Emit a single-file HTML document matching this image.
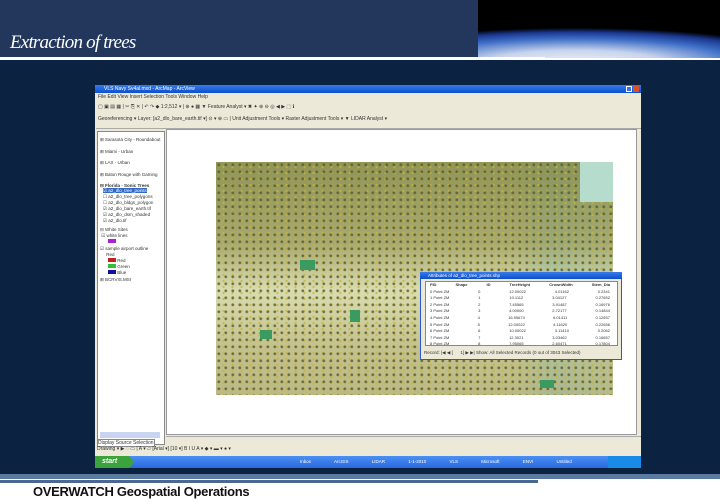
<!DOCTYPE html>
<html><head><style>
*{margin:0;padding:0;box-sizing:border-box}
body{width:720px;height:504px;position:relative;background:#fff;font-family:"Liberation Sans",sans-serif;overflow:hidden}
.a{position:absolute}
.t{font-size:5px;color:#333;white-space:nowrap}
</style></head><body>
<div class="a" style="left:0;top:0;width:720px;height:58px;background:#23375c"></div>
<div class="a" style="left:478px;top:0;width:242px;height:58px;background:#000"></div>
<div class="a" style="left:478px;top:0;width:242px;height:58px;background:radial-gradient(ellipse 300px 45px at 40% 110%,#f0f4fa 0%,#c8d4ec 30%,#4070c8 55%,#1a3890 70%,rgba(0,0,30,0) 80%)"></div>
<div class="a" style="left:10px;top:32px;font-family:'Liberation Serif',serif;font-style:italic;font-size:19px;color:#fff;letter-spacing:-0.8px">Extraction of trees</div>
<div class="a" style="left:0;top:57px;width:545px;height:3px;background:#fff"></div>
<div class="a" style="left:0;top:60px;width:720px;height:414px;background:#0b2240"></div>
<div class="a" style="left:0;top:474px;width:720px;height:5px;background:#5a7aa0"></div>
<div class="a" style="left:0;top:479px;width:720px;height:1px;background:#fff"></div>
<div class="a" style="left:0;top:480px;width:538px;height:3px;background:#4a6890"></div>
<div class="a" style="left:33px;top:484px;font-size:13px;font-weight:bold;color:#111;letter-spacing:-0.3px">OVERWATCH Geospatial Operations</div>

<div class="a" style="left:95px;top:85px;width:546px;height:383px;background:#ece9d8"></div>
<div class="a" style="left:95px;top:85px;width:546px;height:8px;background:linear-gradient(#3a7ae8,#0a4fd0)"></div>
<div class="a t" style="left:104px;top:86px;color:#fff">VLS Navy Sv4al.mxd - ArcMap - ArcView</div>
<div class="a" style="left:633px;top:86px;width:6px;height:6px;background:#d9502a"></div>
<div class="a" style="left:626px;top:86px;width:6px;height:6px;background:#3a70e0;border:1px solid #fff"></div>
<div class="a t" style="left:98px;top:94px">File Edit View Insert Selection Tools Window Help</div>
<div class="a t" style="left:98px;top:104px">▢ ▣ ▤ ▦ | ✂ ⎘ ✕ | ↶ ↷ ◆ 1:2,512 ▾ | ⊕ ● ▦ ▼ Feature Analyst ▾ ✖ ✦ ⊕ ⊖ ◎ ◀ ▶ ⬚ ℹ</div>
<div class="a t" style="left:98px;top:116px">Georeferencing ▾ Layer: [a2_dlo_bare_earth.tif ▾] ⊙ ▾ ⊕ ▭ | Unit Adjustment Tools ▾ Raster Adjustment Tools ▾ ▼ LIDAR Analyst ▾</div>
<div class="a" style="left:96px;top:128px;width:545px;height:1px;background:#aaa"></div>
<div class="a" style="left:97px;top:131px;width:68px;height:314px;background:#fff;border:1px solid #888"></div>
<div class="a t" style="left:100px;top:134px;line-height:11.5px;font-size:4.5px">⊞ Sarasota City - Roundabout<br>⊞ Miami - Urban<br>⊞ LAX - Urban<br>⊞ Baton Rouge with Gaming<br><b>⊟ Florida - Sonic Trees</b></div>
<div class="a t" style="left:103px;top:188px;line-height:6px;font-size:4.5px"><span style="background:#316ac5;color:#fff">☑ a2_dlo_tree_points</span><br>☐ a2_dlo_tree_polygons<br>☐ a2_dlo_bldgs_polygon<br>☑ a2_dlo_bare_earth.tif<br>☑ a2_dlo_dsm_shaded<br>☑ a2_dlo.tif</div>
<div class="a t" style="left:100px;top:227px;line-height:6.2px;font-size:4.5px">⊟ White Sites<br>&nbsp;☑ white lines<br><span style="display:inline-block;width:8px;height:4px;background:#b020d0;margin-left:8px"></span><br>☑ sample airport outline<br>&nbsp;&nbsp;&nbsp;&nbsp;&nbsp;Red<br>
<span style="display:inline-block;width:8px;height:4px;background:#c02020;margin-left:8px"></span> Red<br><span style="display:inline-block;width:8px;height:4px;background:#30c030;margin-left:8px"></span> Green<br><span style="display:inline-block;width:8px;height:4px;background:#1010a0;margin-left:8px"></span> Blue<br>⊞ BCRVIS.MSI</div>
<div class="a" style="left:100px;top:432px;width:60px;height:6px;background:#c8d4f0"></div>
<div class="a t" style="left:97px;top:439px;border:1px solid #888;background:#fff">Display Source Selection</div>
<div class="a" style="left:166px;top:129px;width:471px;height:306px;background:#fff;border:1px solid #999"></div>
<div class="a" style="left:216px;top:162px;width:397px;height:233px;background:
radial-gradient(circle at 40% 40%,rgba(90,90,40,.8) 1px,transparent 1.8px) 0 0/7px 7px,
radial-gradient(circle at 50% 50%,rgba(200,180,50,.8) .8px,transparent 1.4px) 3px 2px/9px 6px,
linear-gradient(180deg,rgba(120,125,55,.75) 0%,rgba(135,135,65,.6) 35%,rgba(200,200,140,.1) 55%,rgba(150,140,70,.35) 80%,rgba(140,130,60,.4) 100%),
linear-gradient(90deg,#dadeb4 0%,#dcdfb4 75%,#bcdcc8 85%,#d2e0bc 100%)"></div>
<div class="a" style="left:580px;top:162px;width:33px;height:40px;background:#b6dccd"></div>
<div class="a" style="left:300px;top:260px;width:15px;height:10px;background:#3a9a60"></div>
<div class="a" style="left:350px;top:310px;width:10px;height:12px;background:#3a9a60"></div>
<div class="a" style="left:260px;top:330px;width:12px;height:9px;background:#3a9a60"></div>
<div class="a" style="left:540px;top:380px;width:14px;height:8px;background:#3a9a60"></div>
<div class="a" style="left:420px;top:272px;width:202px;height:88px;background:#ece9d8;border:1px solid #2a5ad0"></div>
<div class="a" style="left:420px;top:272px;width:202px;height:7px;background:linear-gradient(#3a7ae8,#0a4fd0)"></div>
<div class="a t" style="left:428px;top:273px;color:#fff;font-size:4.5px">Attributes of a2_dlo_tree_points.shp</div>
<div class="a" style="left:425px;top:281px;width:193px;height:65px;background:#fff;border:1px solid #888"></div>
<div class="a t" style="left:430px;top:282px;font-size:4px;line-height:6.6px;width:180px">
<div style="display:flex;justify-content:space-between;font-weight:bold"><span>FID</span><span>Shape</span><span>ID</span><span>TreeHeight</span><span>CrownWidth</span><span>Stem_Dia</span></div>
<div style="display:flex;justify-content:space-between"><span>0 Point ZM</span><span>0</span><span>12.00022</span><span>4.01162</span><span>0.2341</span></div>
<div style="display:flex;justify-content:space-between"><span>1 Point ZM</span><span>1</span><span>10.1112</span><span>3.04127</span><span>0.27652</span></div>
<div style="display:flex;justify-content:space-between"><span>2 Point ZM</span><span>2</span><span>7.45565</span><span>3.91487</span><span>0.16976</span></div>
<div style="display:flex;justify-content:space-between"><span>3 Point ZM</span><span>3</span><span>4.00000</span><span>2.72177</span><span>0.14844</span></div>
<div style="display:flex;justify-content:space-between"><span>4 Point ZM</span><span>4</span><span>16.95674</span><span>6.01411</span><span>0.12657</span></div>
<div style="display:flex;justify-content:space-between"><span>5 Point ZM</span><span>5</span><span>12.00022</span><span>4.11620</span><span>0.22656</span></div>
<div style="display:flex;justify-content:space-between"><span>6 Point ZM</span><span>6</span><span>10.00022</span><span>3.11410</span><span>0.2062</span></div>
<div style="display:flex;justify-content:space-between"><span>7 Point ZM</span><span>7</span><span>12.3021</span><span>3.03462</span><span>0.16657</span></div>
<div style="display:flex;justify-content:space-between"><span>8 Point ZM</span><span>8</span><span>7.95065</span><span>2.60471</span><span>0.17804</span></div>
</div>
<div class="a t" style="left:424px;top:350px;font-size:4.5px">Record: |◀ ◀ [&nbsp;&nbsp;&nbsp;&nbsp;&nbsp;&nbsp;1] ▶ ▶| Show: All Selected Records (0 out of 3043 Selected)</div>
<div class="a" style="left:166px;top:436px;width:475px;height:6px;background:#ece9d8;border-top:1px solid #aaa"></div>
<div class="a t" style="left:97px;top:446px">Drawing ▾ ▶ ◌ ▭ | A ▾ ▱ [Arial ▾] [10 ▾] B I U A ▾ ◆ ▾ ▬ ▾ ● ▾</div>
<div class="a" style="left:95px;top:456px;width:546px;height:12px;background:linear-gradient(#4a90f4,#2a68e0)"></div>
<div class="a" style="left:95px;top:456px;width:38px;height:12px;background:#3ca23c;border-radius:0 6px 6px 0"></div>
<div class="a t" style="left:102px;top:458px;color:#fff;font-size:7px;font-style:italic;font-weight:bold">start</div>
<div class="a t" style="left:300px;top:459px;color:#fff;font-size:4.5px;word-spacing:22px">Inbox ArcGIS LIDAR 1-1-2010 VLS Microsoft ENVI Untitled</div>
<div class="a" style="left:608px;top:456px;width:33px;height:12px;background:#1a8ae8"></div>
</body></html>
